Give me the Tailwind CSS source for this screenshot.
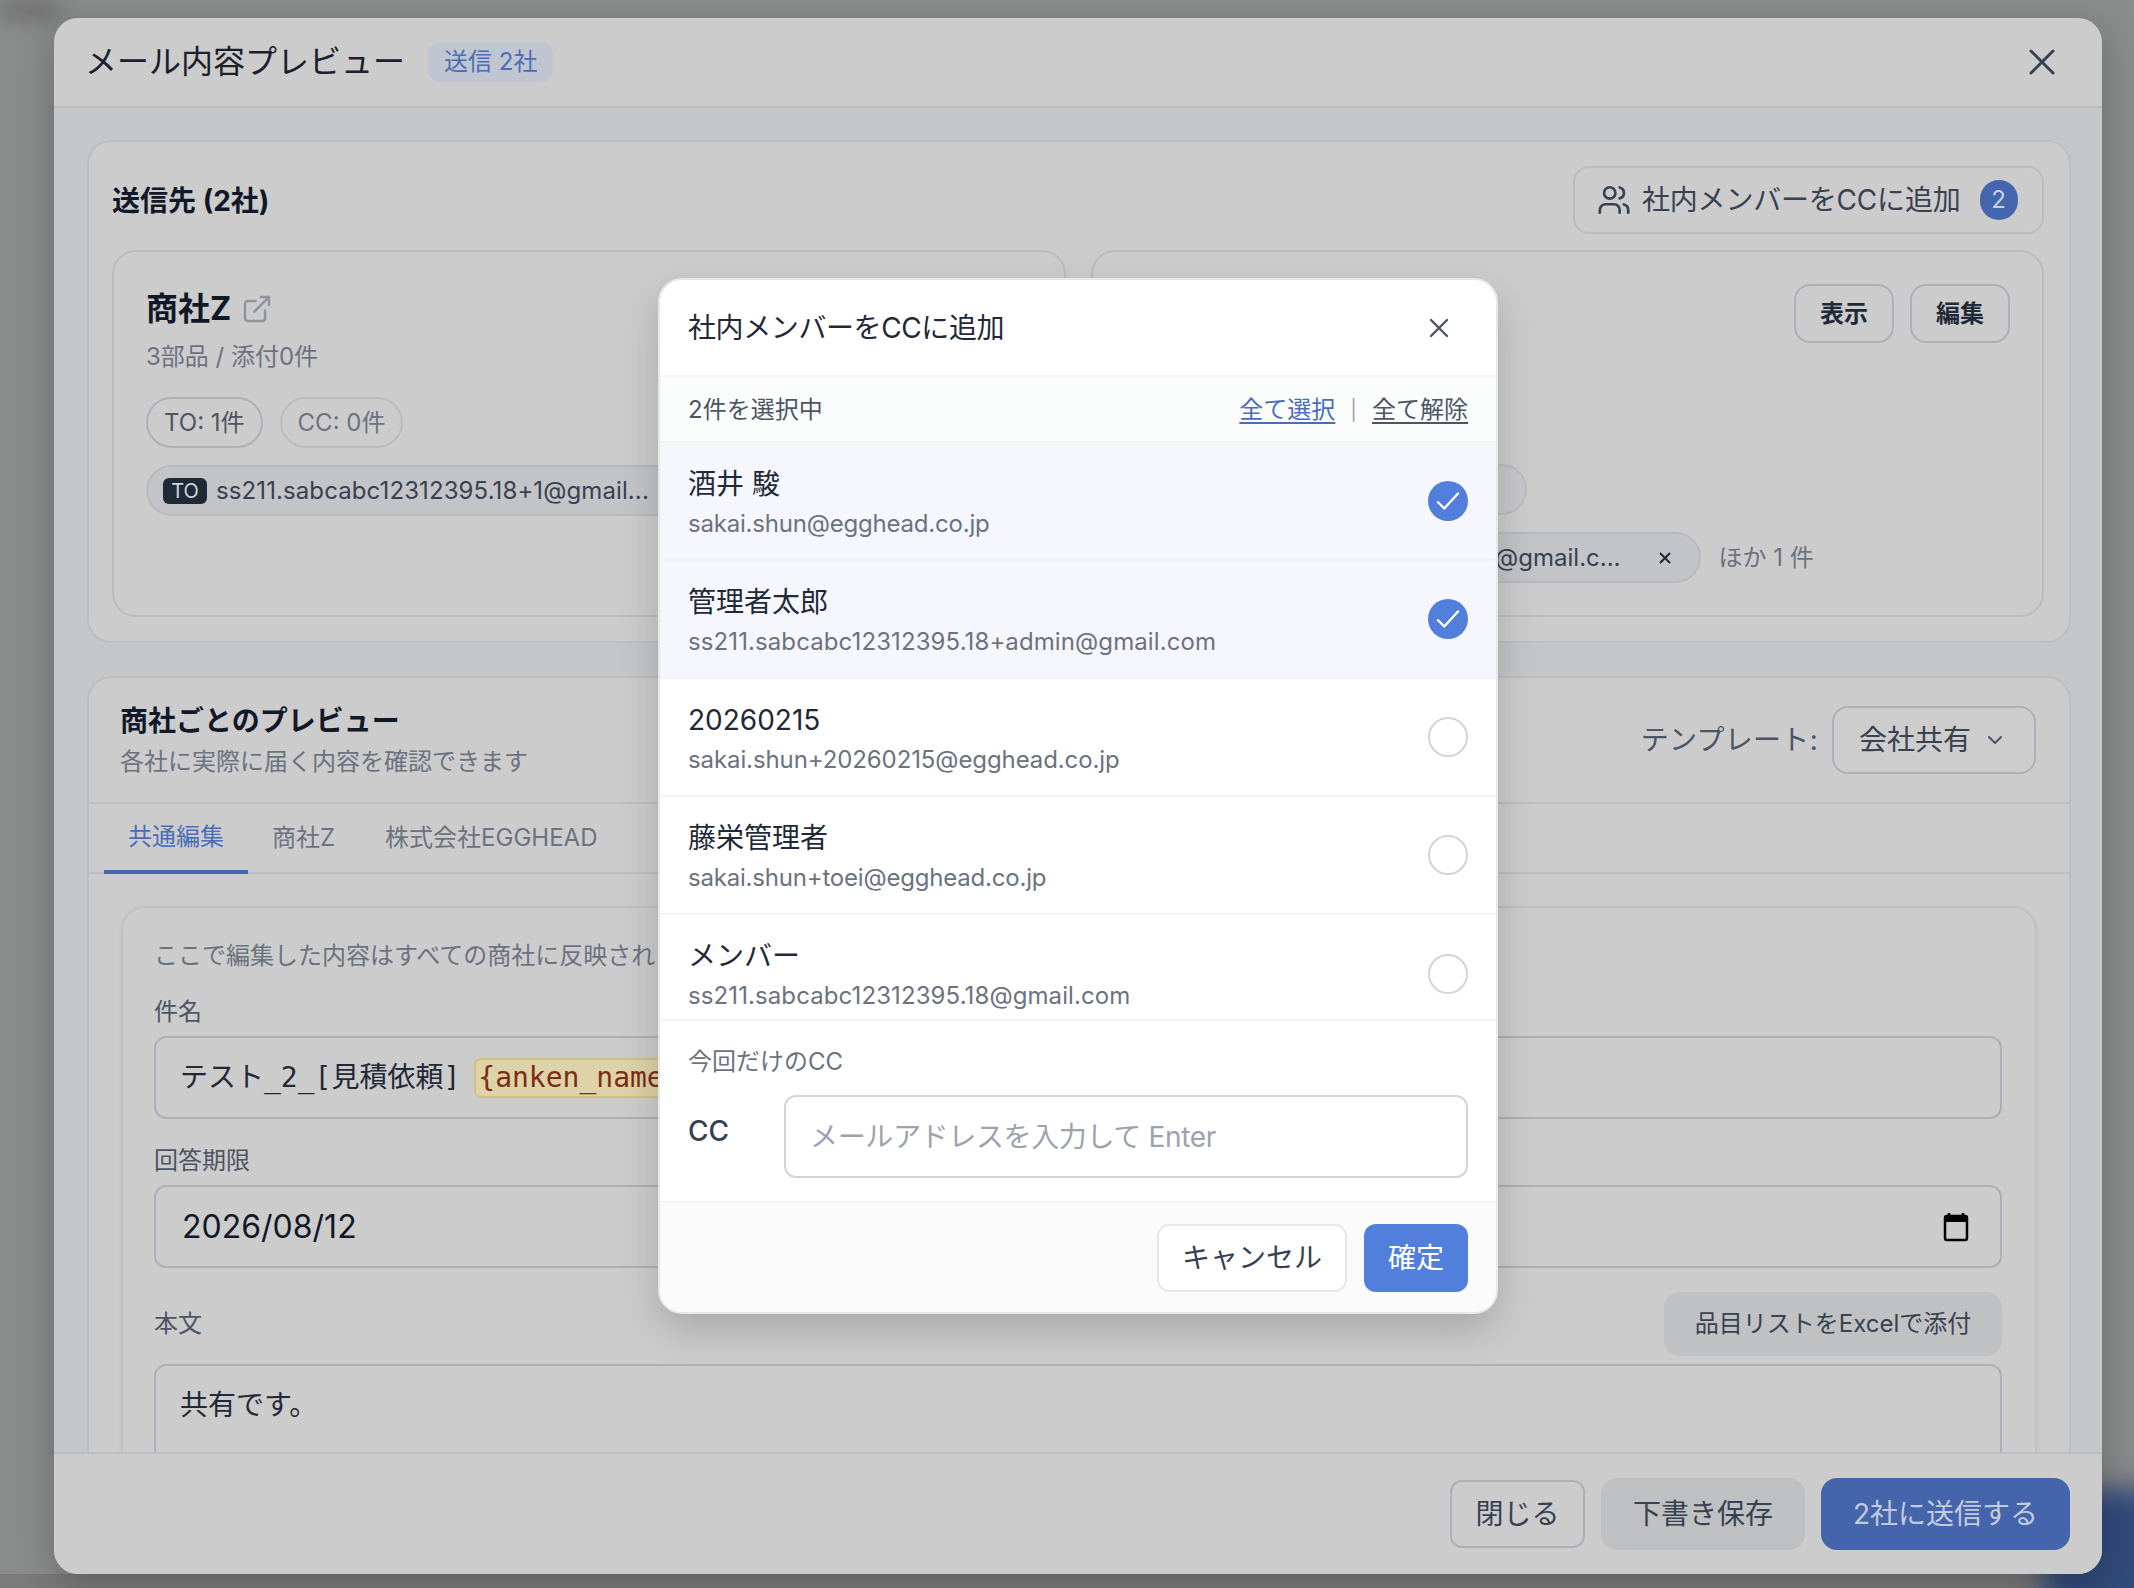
<!DOCTYPE html>
<html lang="ja">
<head>
<meta charset="utf-8">
<title>メール内容プレビュー</title>
<script src="https://cdn.jsdelivr.net/npm/@tailwindcss/browser@4"></script>
</head>
<body class="relative w-[2134px] h-[1588px] overflow-hidden bg-[#8b8c8c] font-[Inter,'Noto_Sans_CJK_JP',sans-serif] text-[#1f2937]">

<!-- blurred page behind -->
<div class="absolute left-0 top-0 w-[60px] h-[20px] bg-[#6f6f6f] blur-[10px]"></div>
<div class="absolute left-0 bottom-0 w-full h-[14px] bg-[#7b7b7b]"></div>
<div class="absolute right-[-30px] bottom-[-30px] w-[120px] h-[130px] bg-[#324a7c] blur-[14px]"></div>

<!-- outer window -->
<div class="absolute left-[54px] top-[18px] w-[2048px] h-[1556px] rounded-[24px] bg-[#cccccc] overflow-hidden flex flex-col shadow-[0_10px_40px_rgba(0,0,0,0.25)]">
  <header class="h-[90px] shrink-0 border-b-2 border-[#bdbec3] pl-[31px] pr-[46px] flex items-center gap-[23px]">
    <h1 class="text-[32px] leading-[44px] font-normal text-[#1a202c]">メール内容プレビュー</h1>
    <span class="h-[40px] px-[16px] rounded-[12px] bg-[#bfc6d2] text-[#4a6db8] text-[24px] flex items-center">送信 2社</span>
    <svg class="ml-auto" width="28" height="28" viewBox="0 0 28 28" fill="none" stroke="#374151" stroke-width="3" stroke-linecap="round"><path d="M3 3l22 22M25 3L3 25"/></svg>
  </header>

  <main class="flex-1 min-h-0 overflow-hidden bg-[#c5c6c8] pl-[33px] pr-[31px] pt-[32px] flex flex-col gap-[33px]">
    <!-- recipients -->
    <section class="h-[503px] shrink-0 rounded-[24px] border-2 border-[#bdbec3] bg-[#cccccc] pl-[23px] pr-[25px] pt-[24px] flex flex-col gap-[16px]">
      <div class="h-[68px] shrink-0 flex items-center justify-between">
        <h2 class="mt-[2px] text-[28px] font-bold text-[#111827]">送信先 (2社)</h2>
        <div class="w-[471px] h-[68px] rounded-[16px] border-2 border-[#bbbcc2] pl-[22px] flex items-center gap-[11px] text-[28px] text-[#374151]">
          <svg width="34" height="34" viewBox="0 0 24 24" fill="none" stroke="#374151" stroke-width="1.9" stroke-linecap="round" stroke-linejoin="round"><path d="M16 21v-2a4 4 0 0 0-4-4H6a4 4 0 0 0-4 4v2"/><circle cx="9" cy="7" r="4"/><path d="M22 21v-2a4 4 0 0 0-3-3.87"/><path d="M16 3.13a4 4 0 0 1 0 7.75"/></svg>
          <span class="tracking-[-0.2px]">社内メンバーをCCに追加</span>
          <span class="ml-[8px] w-[38px] h-[40px] rounded-full bg-[#4466ae] text-[#c9d2e4] text-[24px] flex items-center justify-center">2</span>
        </div>
      </div>
      <div class="h-[367px] grid grid-cols-2 gap-[25px]">
        <article class="rounded-[24px] border-2 border-[#bbbcc2] pl-[32px] pt-[33px] overflow-hidden">
          <div class="h-[48px] flex items-center gap-[10px]">
            <h3 class="text-[32px] font-bold text-[#111827]">商社Z</h3>
            <svg width="32" height="32" viewBox="0 0 24 24" fill="none" stroke="#8f939c" stroke-width="1.8" stroke-linecap="round" stroke-linejoin="round"><path d="M18 13v6a2 2 0 0 1-2 2H5a2 2 0 0 1-2-2V8a2 2 0 0 1 2-2h6"/><path d="M15 3h6v6"/><path d="M10 14 21 3"/></svg>
          </div>
          <p class="mt-[4px] h-[40px] leading-[40px] text-[24px] text-[#6b7280]">3部品 / 添付0件</p>
          <div class="mt-[20px] flex gap-[17px]">
            <span class="h-[51px] px-[16px] rounded-full border-2 border-[#afb0b7] text-[24px] text-[#4b5563] flex items-center">TO: 1件</span>
            <span class="h-[51px] px-[16px] rounded-full border-2 border-[#bbbcc2] text-[24px] text-[#6b7280] flex items-center">CC: 0件</span>
          </div>
          <div class="mt-[17px] h-[51px] w-[800px] rounded-full border-2 border-[#b9bac0] bg-[#c3c4c7] pl-[15px] flex items-center gap-[9px]">
            <span class="w-[44px] h-[26px] rounded-[6px] bg-[#1f2937] text-[#d1d5db] text-[20px] flex items-center justify-center">TO</span>
            <span class="text-[24px] text-[#374151] tracking-[0.1px]">ss211.sabcabc12312395.18+1@gmail...</span>
          </div>
        </article>
        <article class="relative rounded-[24px] border-2 border-[#bbbcc2] overflow-hidden">
          <div class="absolute right-[32px] top-[32px] flex gap-[16px]">
            <span class="w-[100px] h-[59px] rounded-[16px] border-2 border-[#afb0b7] text-[24px] font-bold text-[#1f2937] flex items-center justify-center">表示</span>
            <span class="w-[100px] h-[59px] rounded-[16px] border-2 border-[#afb0b7] text-[24px] font-bold text-[#1f2937] flex items-center justify-center">編集</span>
          </div>
          <div class="absolute left-[300px] top-[212px] w-[134px] h-[51px] rounded-full border-2 border-[#bbbcc2] bg-[#c8c8ca]"></div>
          <div class="absolute left-[300px] top-[280px] flex items-center gap-[18px]">
            <span class="w-[308px] h-[51px] rounded-full border-2 border-[#b9bac0] bg-[#c3c4c7] pr-[28px] flex items-center justify-end text-[24px] text-[#374151]">
              <span class="shrink-0 whitespace-nowrap">18@gmail.c...</span>
              <svg class="ml-[38px] shrink-0" width="12" height="12" viewBox="0 0 12 12" fill="none" stroke="#1f2937" stroke-width="2"><path d="M1 1l10 10M11 1L1 11"/></svg>
            </span>
            <span class="text-[24px] text-[#6b7280]">ほか 1 件</span>
          </div>
        </article>
      </div>
    </section>

    <!-- preview -->
    <section class="flex-1 rounded-t-[24px] border-2 border-b-0 border-[#bdbec3] bg-[#cccccc] overflow-hidden">
      <div class="h-[126px] border-b-2 border-[#bdbec3] pl-[31px] pr-[33px] flex items-center justify-between">
        <div class="pt-[2px]">
          <h2 class="text-[28px] leading-[38px] font-bold text-[#111827]">商社ごとのプレビュー</h2>
          <p class="mt-[4px] text-[24px] leading-[36px] text-[#6b7280]">各社に実際に届く内容を確認できます</p>
        </div>
        <div class="flex items-center gap-[14px]">
          <span class="text-[28px] tracking-[0.3px] text-[#4b5563]">テンプレート:</span>
          <div class="w-[204px] h-[68px] rounded-[16px] border-2 border-[#afb0b7] bg-[#cdcdcd] pl-[25px] pr-[27px] flex items-center justify-between text-[28px] text-[#374151]">
            <span>会社共有</span>
            <svg width="24" height="24" viewBox="0 0 24 24" fill="none" stroke="#4b5563" stroke-width="2" stroke-linecap="round" stroke-linejoin="round"><path d="m6 9 6 6 6-6"/></svg>
          </div>
        </div>
      </div>
      <nav class="h-[70px] border-b-2 border-[#bdbec3] pl-[15px] flex text-[24px]">
        <span class="h-[70px] w-[144px] border-b-4 border-[#4466ae] text-[#4a6db8] flex items-center justify-center">共通編集</span>
        <span class="h-[70px] ml-[24px] -mt-[1px] text-[#6b7280] flex items-center">商社Z</span>
        <span class="h-[70px] ml-[50px] -mt-[1px] text-[#6b7280] flex items-center">株式会社EGGHEAD</span>
      </nav>
      <div class="pl-[32px] pr-[32px] pt-[32px]">
        <div class="h-[700px] rounded-t-[24px] border-2 border-[#c0c1c5] pl-[31px] pr-[33px] pt-[28px] shadow-[0_1px_4px_rgba(0,0,0,0.06)]">
          <p class="h-[40px] leading-[40px] text-[24px] text-[#6b7280] whitespace-nowrap">ここで編集した内容はすべての商社に反映されます</p>
          <label class="block mt-[16px] h-[40px] leading-[40px] text-[24px] text-[#4b5563]">件名</label>
          <div class="mt-[4px] h-[83px] rounded-[12px] border-2 border-[#aeafb8] pl-[24px] flex items-center font-['DejaVu_Sans_Mono','Noto_Sans_CJK_JP',monospace] text-[28px] text-[#1f2937] whitespace-nowrap overflow-hidden">
            <span>テスト_2_[見積依頼]</span>
            <span class="ml-[14px] h-[40px] px-[2px] rounded-[6px] border-2 border-[#d4c07e] bg-[#ddd2a8] text-[#7c2d12] flex items-center">{anken_name}</span>
          </div>
          <label class="block mt-[22px] h-[40px] leading-[40px] text-[24px] text-[#4b5563]">回答期限</label>
          <div class="mt-[4px] h-[83px] rounded-[12px] border-2 border-[#aeafb8] pl-[26px] pr-[31px] flex items-center justify-between text-[32px] text-[#111827]">
            <span>2026/08/12</span>
            <svg width="26" height="30" viewBox="0 0 26 30"><path d="M6 1v4M20 1v4" stroke="#000" stroke-width="2.5"/><rect x="2" y="4" width="22" height="24" rx="2" fill="none" stroke="#000" stroke-width="2.5"/><rect x="2" y="4" width="22" height="6" fill="#000"/></svg>
          </div>
          <div class="mt-[24px] h-[64px] flex items-center justify-between">
            <label class="text-[24px] text-[#4b5563]">本文</label>
            <span class="w-[338px] h-[64px] rounded-[16px] bg-[#c0c1c3] text-[24px] text-[#374151] flex items-center justify-center">品目リストをExcelで添付</span>
          </div>
          <div class="mt-[8px] h-[200px] rounded-t-[12px] border-2 border-[#aeafb8] px-[24px] pt-[19px] text-[28px] leading-[40px] text-[#1f2937]">共有です。</div>
        </div>
      </div>
    </section>
  </main>

  <footer class="h-[122px] shrink-0 border-t-2 border-[#bdbec3] bg-[#cccccc] pr-[32px] flex items-center justify-end gap-[16px] text-[28px]">
    <span class="w-[135px] h-[68px] rounded-[12px] border-2 border-[#afb0b7] text-[#374151] flex items-center justify-center">閉じる</span>
    <span class="w-[204px] h-[72px] rounded-[16px] bg-[#bfc0c2] text-[#374151] flex items-center justify-center">下書き保存</span>
    <span class="w-[249px] h-[72px] rounded-[16px] bg-[#4464ab] text-[#c3cbdb] flex items-center justify-center">2社に送信する</span>
  </footer>
</div>

<!-- member picker dialog -->
<div class="absolute left-[658px] top-[278px] w-[840px] h-[1036px] rounded-[24px] border-2 border-[#e5e7eb] bg-white overflow-hidden flex flex-col shadow-[0_16px_40px_rgba(0,0,0,0.18)]">
  <div class="h-[97px] shrink-0 border-b-2 border-[#f3f4f6] pl-[28px] pr-[47px] flex items-center justify-between">
    <h2 class="text-[28px] font-normal tracking-[-0.4px] text-[#1f2937]">社内メンバーをCCに追加</h2>
    <svg width="20" height="20" viewBox="0 0 20 20" fill="none" stroke="#4b5563" stroke-width="2.4" stroke-linecap="round"><path d="M2 2l16 16M18 2L2 18"/></svg>
  </div>
  <div class="h-[66px] shrink-0 border-b-2 border-[#f3f4f6] bg-[#fbfcfc] px-[28px] pt-[2px] flex items-center justify-between text-[24px]">
    <span class="text-[#4b5563]">2件を選択中</span>
    <div class="flex items-center gap-[15px]">
      <a class="text-[#4a6db8] underline underline-offset-4">全て選択</a>
      <span class="text-[#9ca3af] text-[20px]">|</span>
      <a class="text-[#4b5563] underline underline-offset-4">全て解除</a>
    </div>
  </div>
  <ul class="h-[578px] shrink-0 overflow-hidden border-b-2 border-[#f3f4f6]">
    <li class="h-[118px] border-b-2 border-[#f3f4f6] bg-[#f6f7fc] pl-[28px] pr-[28px] flex items-center justify-between">
      <div class="mt-[3px]"><p class="text-[28px] leading-[40px] text-[#1f2937]">酒井 駿</p><p class="mt-[2px] text-[24px] leading-[36px] text-[#6b7280] tracking-[-0.2px]">sakai.shun@egghead.co.jp</p></div>
      <span class="w-[40px] h-[40px] rounded-full bg-[#527fdc] flex items-center justify-center"><svg width="30" height="30" viewBox="0 0 24 24" fill="none" stroke="#fff" stroke-width="1.9" stroke-linecap="round" stroke-linejoin="round"><path d="M4 13l5 5L20 6"/></svg></span>
    </li>
    <li class="h-[118px] border-b-2 border-[#f3f4f6] bg-[#f6f7fc] pl-[28px] pr-[28px] flex items-center justify-between">
      <div class="mt-[3px]"><p class="text-[28px] leading-[40px] text-[#1f2937]">管理者太郎</p><p class="mt-[2px] text-[24px] leading-[36px] text-[#6b7280] tracking-[0.1px]">ss211.sabcabc12312395.18+admin@gmail.com</p></div>
      <span class="w-[40px] h-[40px] rounded-full bg-[#527fdc] flex items-center justify-center"><svg width="30" height="30" viewBox="0 0 24 24" fill="none" stroke="#fff" stroke-width="1.9" stroke-linecap="round" stroke-linejoin="round"><path d="M4 13l5 5L20 6"/></svg></span>
    </li>
    <li class="h-[118px] border-b-2 border-[#f3f4f6] pl-[28px] pr-[28px] flex items-center justify-between">
      <div class="mt-[3px]"><p class="text-[28px] leading-[40px] text-[#1f2937]">20260215</p><p class="mt-[2px] text-[24px] leading-[36px] text-[#6b7280] tracking-[-0.1px]">sakai.shun+20260215@egghead.co.jp</p></div>
      <span class="w-[40px] h-[40px] rounded-full border-2 border-[#d1d5db]"></span>
    </li>
    <li class="h-[118px] border-b-2 border-[#f3f4f6] pl-[28px] pr-[28px] flex items-center justify-between">
      <div class="mt-[3px]"><p class="text-[28px] leading-[40px] text-[#1f2937]">藤栄管理者</p><p class="mt-[2px] text-[24px] leading-[36px] text-[#6b7280] tracking-[-0.2px]">sakai.shun+toei@egghead.co.jp</p></div>
      <span class="w-[40px] h-[40px] rounded-full border-2 border-[#d1d5db]"></span>
    </li>
    <li class="h-[118px] pl-[28px] pr-[28px] flex items-center justify-between">
      <div class="mt-[2px]"><p class="text-[28px] leading-[40px] text-[#1f2937]">メンバー</p><p class="mt-[2px] text-[24px] leading-[36px] text-[#6b7280] tracking-[0.1px]">ss211.sabcabc12312395.18@gmail.com</p></div>
      <span class="w-[40px] h-[40px] rounded-full border-2 border-[#d1d5db]"></span>
    </li>
  </ul>
  <div class="h-[182px] shrink-0 border-b-2 border-[#f3f4f6] px-[28px] pt-[23px]">
    <p class="text-[24px] leading-[36px] text-[#6b7280]">今回だけのCC</p>
    <div class="mt-[15px] flex">
      <label class="w-[96px] pt-[16px] text-[28px] leading-[40px] font-medium text-[#374151]">CC</label>
      <input class="w-[684px] h-[83px] rounded-[12px] border-2 border-[#d1d5db] px-[24px] text-[28px] tracking-[-0.35px] placeholder:text-[#9ca3af] bg-white" placeholder="メールアドレスを入力して Enter">
    </div>
  </div>
  <div class="flex-1 bg-[#fbfbfb] pr-[28px] flex items-center justify-end gap-[17px] text-[28px]">
    <span class="w-[190px] h-[68px] rounded-[12px] border-2 border-[#e5e7eb] bg-white text-[#374151] flex items-center justify-center">キャンセル</span>
    <span class="w-[104px] h-[68px] rounded-[12px] bg-[#527fdc] text-white flex items-center justify-center">確定</span>
  </div>
</div>
</body>
</html>
